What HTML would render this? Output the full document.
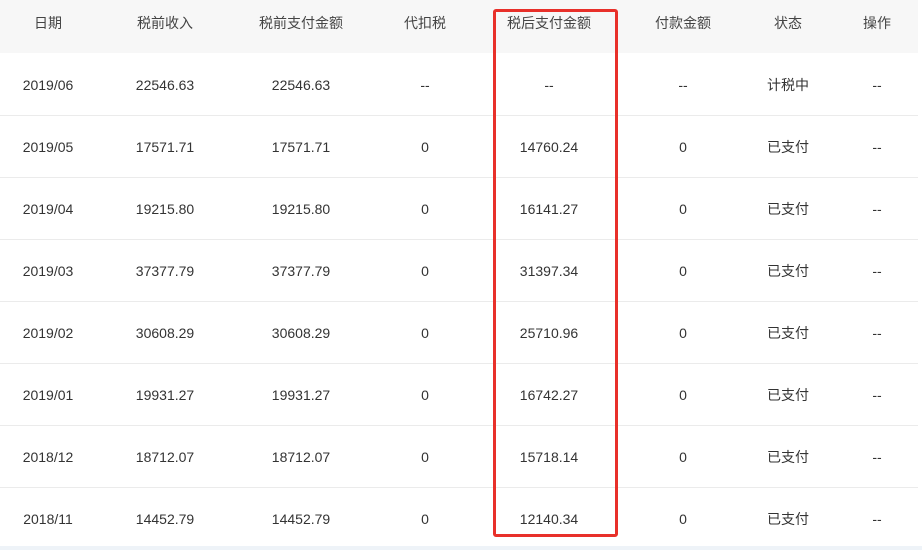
<!DOCTYPE html><html><head><style>
body{margin:0;width:922px;height:550px;background:#fff;font-family:"Liberation Sans","Noto Sans CJK SC",sans-serif;font-size:14px;color:#333;position:relative;overflow:hidden}
.hd{position:absolute;left:0;top:0;width:918px;height:53px;background:#f7f7f7}
.row{position:absolute;left:0;width:918px;height:61px;border-bottom:1px solid #ebebeb}
.c{position:absolute;top:0;transform:translateX(-50%);white-space:nowrap;line-height:inherit}
.hd .c{line-height:47px;color:#444}
.row .c{line-height:62px}
.box{position:absolute;left:493px;top:9px;width:119px;height:522px;border:3px solid #e8302a;border-radius:3px}
.bot{position:absolute;left:0;top:546px;width:922px;height:4px;background:#eef3f8}
</style></head><body>
<div class="hd">
<span class="c" style="left:48px">日期</span><span class="c" style="left:165px">税前收入</span><span class="c" style="left:301px">税前支付金额</span><span class="c" style="left:425px">代扣税</span><span class="c" style="left:549px">税后支付金额</span><span class="c" style="left:683px">付款金额</span><span class="c" style="left:788px">状态</span><span class="c" style="left:877px">操作</span>
</div>
<div class="row" style="top:54px"><span class="c" style="left:48px">2019/06</span><span class="c" style="left:165px">22546.63</span><span class="c" style="left:301px">22546.63</span><span class="c" style="left:425px">--</span><span class="c" style="left:549px">--</span><span class="c" style="left:683px">--</span><span class="c" style="left:788px">计税中</span><span class="c" style="left:877px">--</span></div>
<div class="row" style="top:116px"><span class="c" style="left:48px">2019/05</span><span class="c" style="left:165px">17571.71</span><span class="c" style="left:301px">17571.71</span><span class="c" style="left:425px">0</span><span class="c" style="left:549px">14760.24</span><span class="c" style="left:683px">0</span><span class="c" style="left:788px">已支付</span><span class="c" style="left:877px">--</span></div>
<div class="row" style="top:178px"><span class="c" style="left:48px">2019/04</span><span class="c" style="left:165px">19215.80</span><span class="c" style="left:301px">19215.80</span><span class="c" style="left:425px">0</span><span class="c" style="left:549px">16141.27</span><span class="c" style="left:683px">0</span><span class="c" style="left:788px">已支付</span><span class="c" style="left:877px">--</span></div>
<div class="row" style="top:240px"><span class="c" style="left:48px">2019/03</span><span class="c" style="left:165px">37377.79</span><span class="c" style="left:301px">37377.79</span><span class="c" style="left:425px">0</span><span class="c" style="left:549px">31397.34</span><span class="c" style="left:683px">0</span><span class="c" style="left:788px">已支付</span><span class="c" style="left:877px">--</span></div>
<div class="row" style="top:302px"><span class="c" style="left:48px">2019/02</span><span class="c" style="left:165px">30608.29</span><span class="c" style="left:301px">30608.29</span><span class="c" style="left:425px">0</span><span class="c" style="left:549px">25710.96</span><span class="c" style="left:683px">0</span><span class="c" style="left:788px">已支付</span><span class="c" style="left:877px">--</span></div>
<div class="row" style="top:364px"><span class="c" style="left:48px">2019/01</span><span class="c" style="left:165px">19931.27</span><span class="c" style="left:301px">19931.27</span><span class="c" style="left:425px">0</span><span class="c" style="left:549px">16742.27</span><span class="c" style="left:683px">0</span><span class="c" style="left:788px">已支付</span><span class="c" style="left:877px">--</span></div>
<div class="row" style="top:426px"><span class="c" style="left:48px">2018/12</span><span class="c" style="left:165px">18712.07</span><span class="c" style="left:301px">18712.07</span><span class="c" style="left:425px">0</span><span class="c" style="left:549px">15718.14</span><span class="c" style="left:683px">0</span><span class="c" style="left:788px">已支付</span><span class="c" style="left:877px">--</span></div>
<div class="row" style="top:488px;border-bottom:none"><span class="c" style="left:48px">2018/11</span><span class="c" style="left:165px">14452.79</span><span class="c" style="left:301px">14452.79</span><span class="c" style="left:425px">0</span><span class="c" style="left:549px">12140.34</span><span class="c" style="left:683px">0</span><span class="c" style="left:788px">已支付</span><span class="c" style="left:877px">--</span></div>
<div class="bot"></div>
<div class="box"></div>
</body></html>
